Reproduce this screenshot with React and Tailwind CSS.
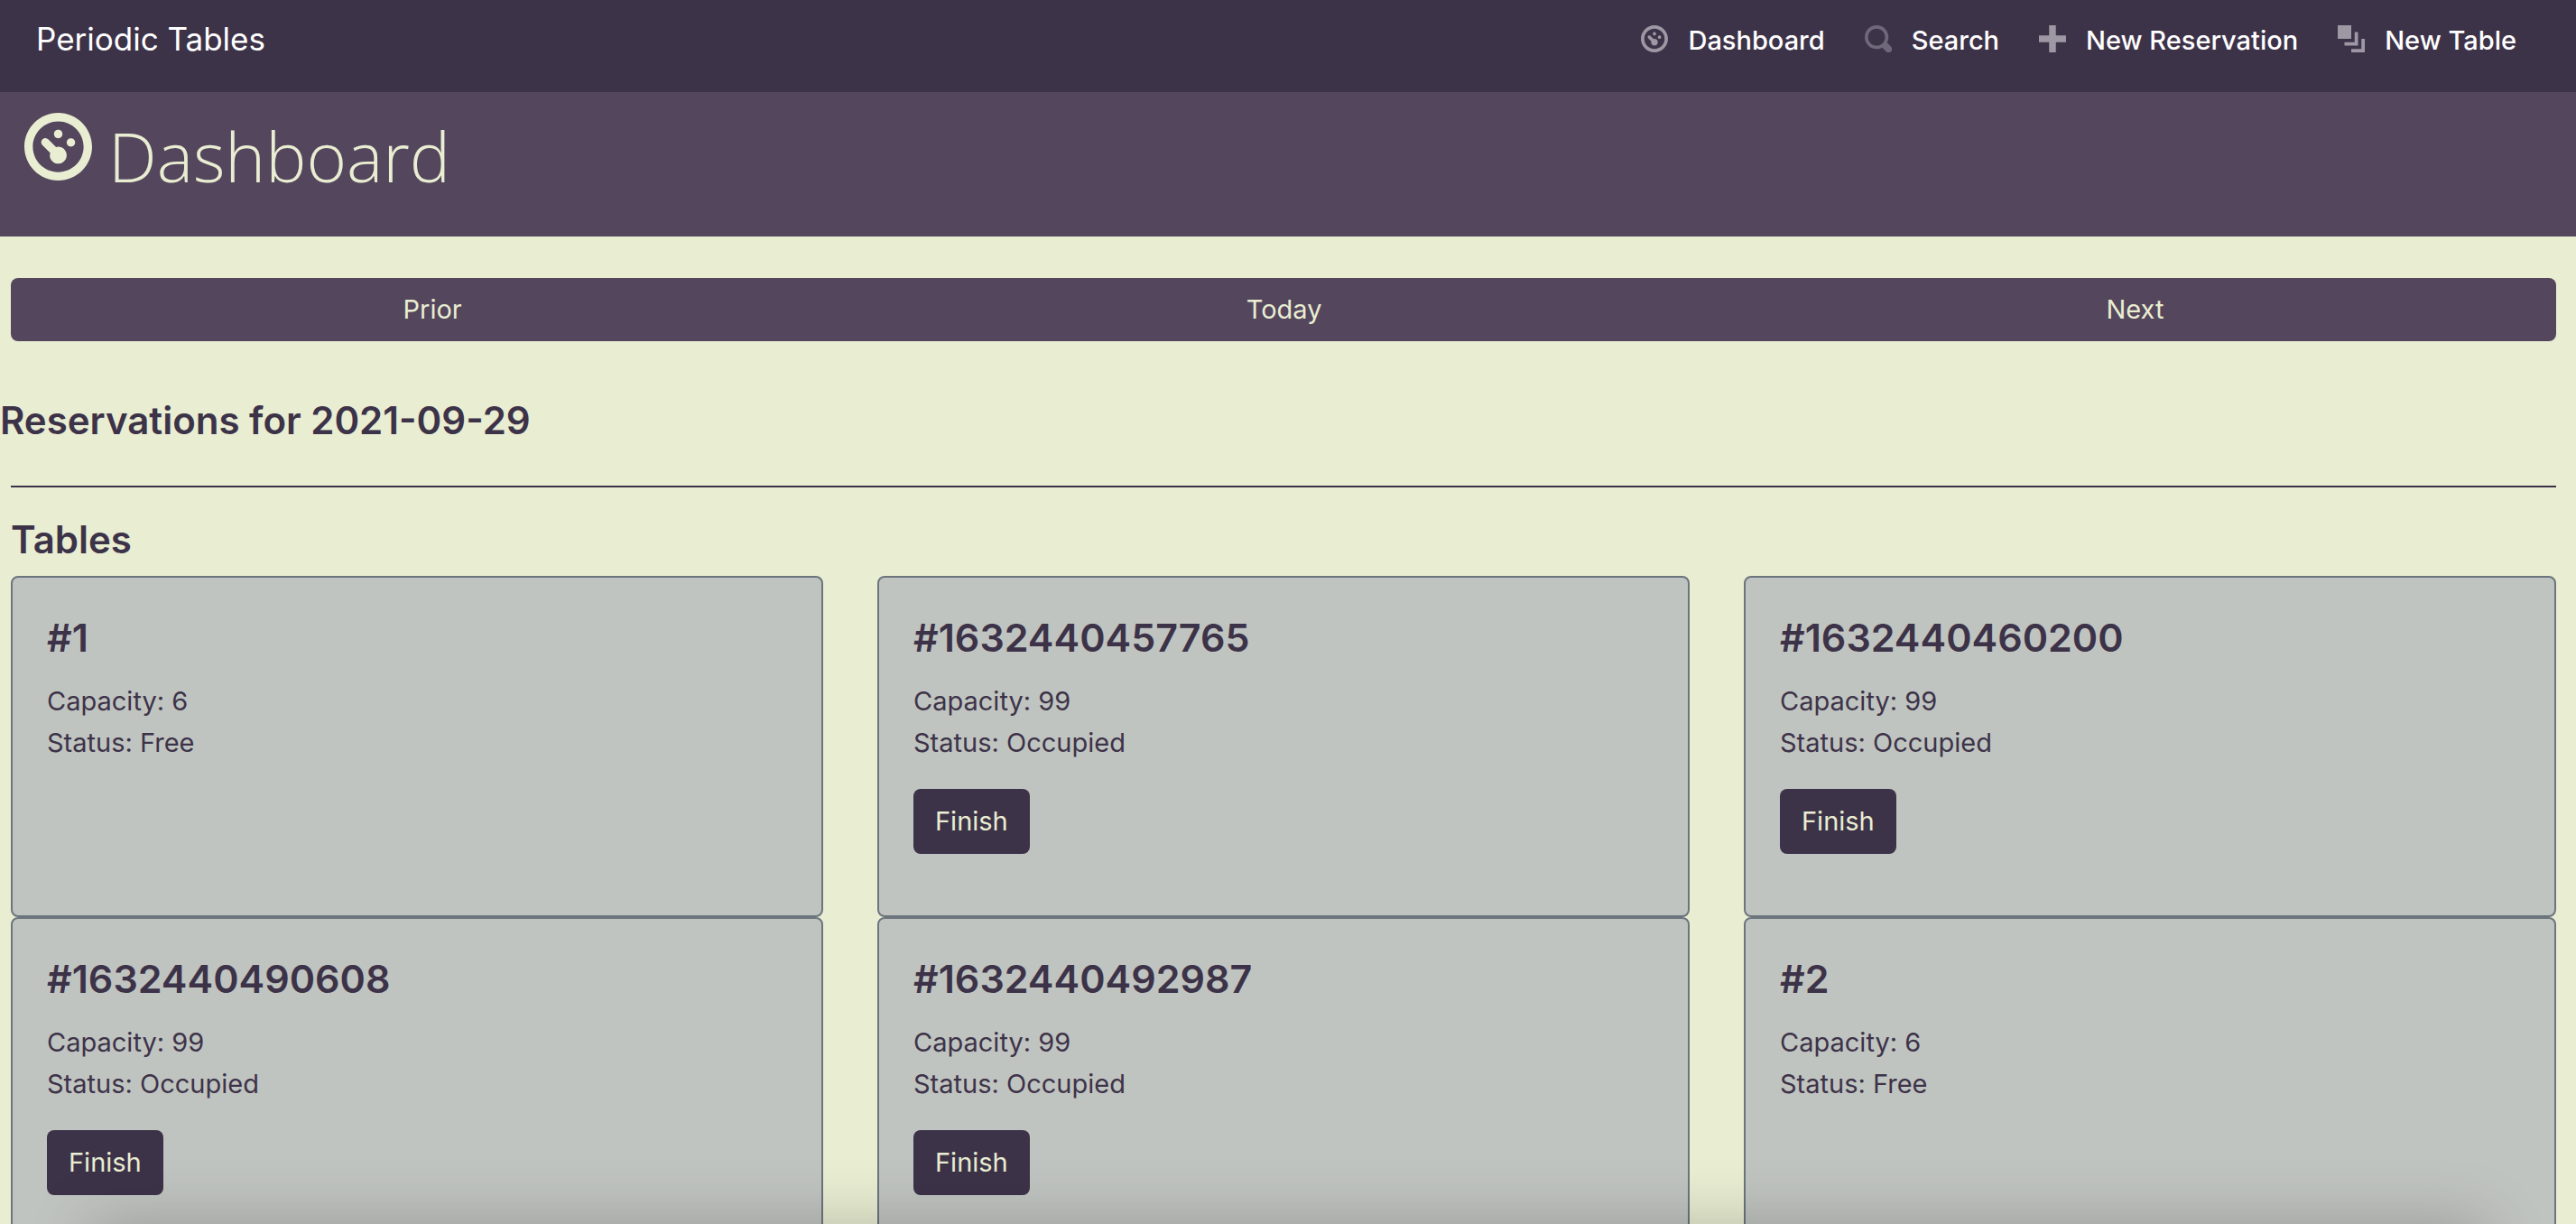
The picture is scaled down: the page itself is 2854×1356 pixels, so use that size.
const ICONS = {
  dashboard:
    "M4 0c-2.2 0-4 1.8-4 4s1.8 4 4 4 4-1.8 4-4-1.8-4-4-4zm0 1c1.66 0 3 1.34 3 3s-1.34 3-3 3-3-1.34-3-3 1.34-3 3-3zm0 1c-.28 0-.5.22-.5.5s.22.5.5.5.5-.22.5-.5-.22-.5-.5-.5zm-1.66 1a.5.5 0 0 0-.19.84l.91.91c-.02.08-.06.16-.06.25 0 .55.45 1 1 1s1-.45 1-1-.45-1-1-1c-.09 0-.17.04-.25.06l-.91-.91a.5.5 0 0 0-.44-.16.5.5 0 0 0-.06 0zm3.16 0c-.28 0-.5.22-.5.5s.22.5.5.5.5-.22.5-.5-.22-.5-.5-.5z",
  search:
    "M3.5 0c-1.93 0-3.5 1.57-3.5 3.5s1.57 3.5 3.5 3.5c.59 0 1.17-.14 1.66-.41a1 1 0 0 0 .13.13l1 1a1.02 1.02 0 1 0 1.44-1.44l-1-1a1 1 0 0 0-.16-.13c.27-.49.44-1.06.44-1.66 0-1.93-1.55-3.5-3.5-3.5zm0 1c1.39 0 2.5 1.11 2.5 2.5 0 .66-.24 1.27-.66 1.72-.01.01-.02.02-.03.03a1 1 0 0 0-.13.13c-.44.4-1.04.63-1.69.63-1.39 0-2.5-1.11-2.5-2.5s1.11-2.5 2.5-2.5z",
  plus: "M3 0v3h-3v2h3v3h2v-3h3v-2h-3v-3h-2z",
  layers: "M0 0v4h4v-4h-4zm5 2v3h-3v1h4v-4h-1zm2 2v3h-3v1h4v-4h-1z",
};

const NAV = [
  { label: "Dashboard", icon: "dashboard", tone: "text-[#9e98a4]" },
  { label: "Search", icon: "search", tone: "text-[#6f677a]" },
  { label: "New Reservation", icon: "plus", tone: "text-[#9e98a4]" },
  { label: "New Table", icon: "layers", tone: "text-[#9e98a4]" },
];

const TABLES = [
  { name: "1", capacity: 6, occupied: false },
  { name: "1632440457765", capacity: 99, occupied: true },
  { name: "1632440460200", capacity: 99, occupied: true },
  { name: "1632440490608", capacity: 99, occupied: true },
  { name: "1632440492987", capacity: 99, occupied: true },
  { name: "2", capacity: 6, occupied: false },
];

function Icon({ name, className }) {
  return (
    <svg viewBox="0 0 8 8" fill="currentColor" aria-hidden="true" className={className}>
      <path d={ICONS[name]} />
    </svg>
  );
}

function NavLink({ label, icon, tone }) {
  return (
    <a href="#" className="flex items-center gap-[22px]">
      <Icon name={icon} className={`mb-1 size-[30px] ${tone}`} />
      <span>{label}</span>
    </a>
  );
}

function TableCard({ name, capacity, occupied }) {
  return (
    <article className="rounded-lg border-2 border-[#6c757d] bg-[#c0c4c0] p-[38px]">
      <h4 className="mb-5 text-[43px] leading-[56px] font-semibold">#{name}</h4>
      <p>Capacity: {capacity}</p>
      <p>Status: {occupied ? "Occupied" : "Free"}</p>
      {occupied && (
        <button
          type="button"
          className="mt-7 mb-[30px] h-[72px] rounded-lg bg-[#3d3349] px-6 text-[#e9edd2]"
        >
          Finish
        </button>
      )}
    </article>
  );
}

export default function App() {
  return (
    <div className="h-screen overflow-hidden bg-[#e9edd2] font-['Inter',sans-serif] text-[29px] leading-[46px] text-[#3d3349]">
      <header className="flex h-[102px] items-start justify-between bg-[#3d3349] pt-5 pr-[66px] pl-10 text-white">
        <a href="#" className="text-[35px]">
          Periodic Tables
        </a>
        <nav className="flex gap-11 pt-[2px] font-medium">
          {NAV.map((item) => (
            <NavLink key={item.label} {...item} />
          ))}
        </nav>
      </header>

      <div className="flex h-40 items-start gap-[18px] bg-[#54465c] pt-[23px] pl-[27px] text-[#e9edd2]">
        <Icon name="dashboard" className="size-[75px]" />
        <h1 className="font-['Open_Sans',sans-serif] text-[76px] leading-[96px] font-light">Dashboard</h1>
      </div>

      <main className="pt-[46px] pr-[22px] pl-3">
        <div role="group" aria-label="Change date" className="flex h-[70px] overflow-hidden rounded-lg bg-[#54465c] text-[#e9edd2]">
          <button type="button" className="flex-auto px-6">Prior</button>
          <button type="button" className="flex-auto px-6">Today</button>
          <button type="button" className="flex-auto px-6">Next</button>
        </div>

        <h4 className="mt-[60px] -ml-3 text-[42px] leading-[56px] font-semibold">Reservations for 2021-09-29</h4>
        <hr className="mt-11 border-t-2 border-[#3d3349]" />

        <h4 className="mt-[30px] mb-3 text-[42px] leading-[56px] font-semibold">Tables</h4>
        <section className="grid grid-cols-3 gap-x-[60px]">
          {TABLES.map((table) => (
            <TableCard key={table.name} {...table} />
          ))}
        </section>
      </main>

      <div className="pointer-events-none fixed inset-x-[100px] top-full h-20 shadow-[0_0_70px_rgba(0,0,0,0.22)]" />
    </div>
  );
}
